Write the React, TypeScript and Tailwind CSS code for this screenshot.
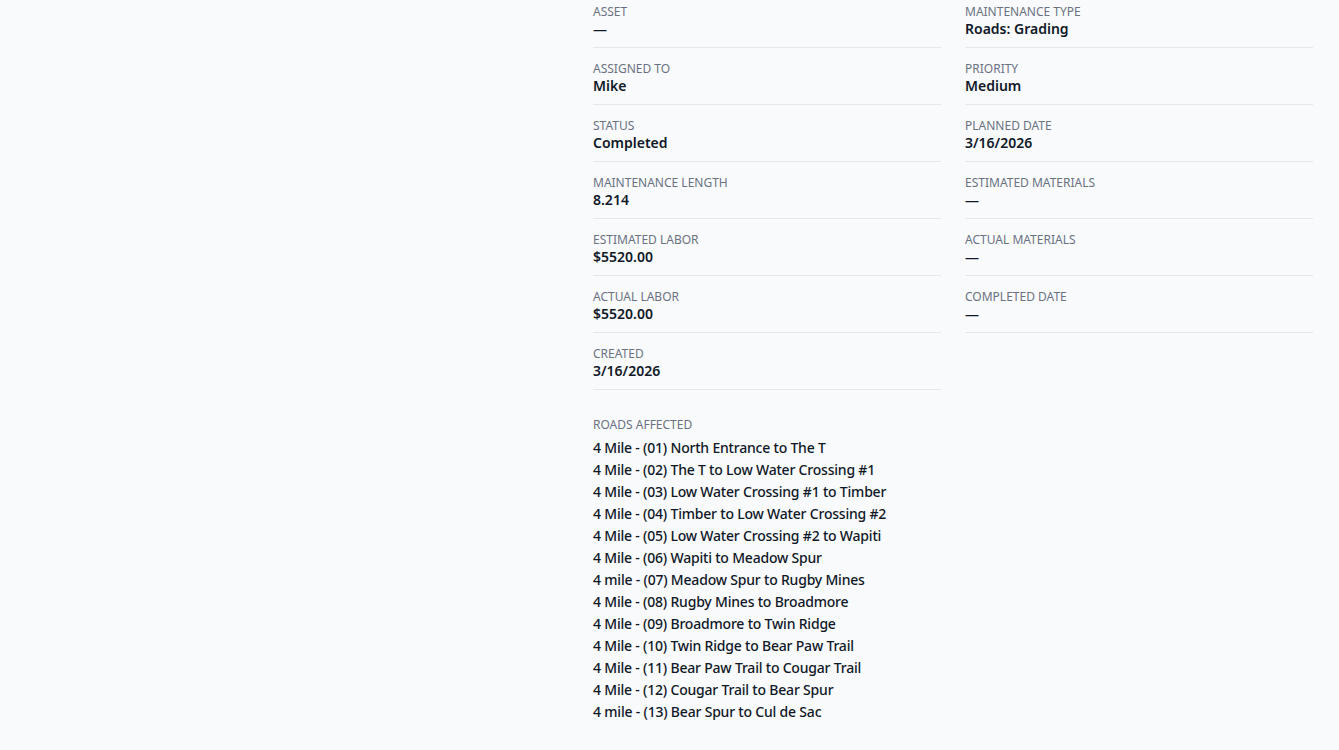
const LEFT_FIELDS = [
  { label: "Asset", value: "—" },
  { label: "Assigned To", value: "Mike" },
  { label: "Status", value: "Completed" },
  { label: "Maintenance Length", value: "8.214" },
  { label: "Estimated Labor", value: "$5520.00" },
  { label: "Actual Labor", value: "$5520.00" },
  { label: "Created", value: "3/16/2026" },
];

const RIGHT_FIELDS = [
  { label: "Maintenance Type", value: "Roads: Grading" },
  { label: "Priority", value: "Medium" },
  { label: "Planned Date", value: "3/16/2026" },
  { label: "Estimated Materials", value: "—" },
  { label: "Actual Materials", value: "—" },
  { label: "Completed Date", value: "—" },
];

const ROADS = [
  "4 Mile - (01) North Entrance to The T",
  "4 Mile - (02) The T to Low Water Crossing #1",
  "4 Mile - (03) Low Water Crossing #1 to Timber",
  "4 Mile - (04) Timber to Low Water Crossing #2",
  "4 Mile - (05) Low Water Crossing #2 to Wapiti",
  "4 Mile - (06) Wapiti to Meadow Spur",
  "4 mile - (07) Meadow Spur to Rugby Mines",
  "4 Mile - (08) Rugby Mines to Broadmore",
  "4 Mile - (09) Broadmore to Twin Ridge",
  "4 Mile - (10) Twin Ridge to Bear Paw Trail",
  "4 Mile - (11) Bear Paw Trail to Cougar Trail",
  "4 Mile - (12) Cougar Trail to Bear Spur",
  "4 mile - (13) Bear Spur to Cul de Sac",
];

function Field({ label, value }: { label: string; value: string }) {
  return (
    <div className="border-b border-gray-200 pt-3 pb-2.5">
      <div className="text-xs leading-[18px] uppercase text-gray-500">{label}</div>
      <div className="text-sm leading-4 font-semibold text-gray-900">{value}</div>
    </div>
  );
}

export default function App() {
  return (
    <div
      className="min-h-screen overflow-hidden bg-gray-50"
      style={{ fontFamily: '"Noto Sans", "Open Sans", sans-serif' }}
    >
      <div className="flex -mt-[9px]">
        <div className="w-[593px] shrink-0" />
        <div className="w-[720px]">
          <div className="grid grid-cols-2 gap-x-6">
            <div>
              {LEFT_FIELDS.map((f) => (
                <Field key={f.label} label={f.label} value={f.value} />
              ))}
            </div>
            <div>
              {RIGHT_FIELDS.map((f) => (
                <Field key={f.label} label={f.label} value={f.value} />
              ))}
            </div>
          </div>

          {/* Roads */}
          <div className="mt-[27px]">
            <div className="mb-[5px] text-xs leading-4 uppercase text-gray-500">Roads Affected</div>
            <div className="space-y-0.5">
              {ROADS.map((r) => (
                <div key={r} className="text-sm leading-5 font-medium tracking-[-0.2px] text-gray-900">
                  {r}
                </div>
              ))}
            </div>
          </div>
        </div>
      </div>
    </div>
  );
}
